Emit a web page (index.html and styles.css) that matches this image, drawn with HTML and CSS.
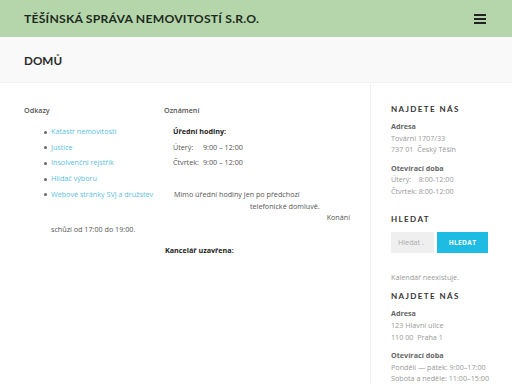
FILE: index.html
```html
<!DOCTYPE html>
<html lang="cs">
<head>
  <meta charset="UTF-8">
  <title>Těšínská správa nemovitostí s.r.o.</title>
  <link rel="stylesheet" href="styles.css">
</head>
<body>

<header class="site-header">
  <div class="brand">Těšínská správa nemovitostí s.r.o.</div>
  <button class="menu-toggle" aria-label="Menu">
    <span></span><span></span><span></span>
  </button>
</header>

<div class="page-title">
  <h1>Domů</h1>
</div>

<div class="page">
  <main class="content">
    <div class="columns">
      <div class="col">
        <h2 class="col-title">Odkazy</h2>
        <ul class="links">
          <li><a href="#">Katastr nemovitostí</a></li>
          <li><a href="#">Justice</a></li>
          <li><a href="#">Insolvenční rejstřík</a></li>
          <li><a href="#">Hlídač výboru</a></li>
          <li><a href="#">Webové stránky SVJ a družstev</a></li>
        </ul>
      </div>
      <div class="col">
        <h2 class="col-title">Oznámení</h2>
        <div class="notice">
          <p class="hours-title">Úřední hodiny:</p>
          <p class="hours"><span class="day">Úterý:</span>9:00 – 12:00</p>
          <p class="hours"><span class="day">Čtvrtek:</span>9:00 – 12:00</p>
          <p class="note">
            <span class="note-1">Mimo úřední hodiny jen po předchozí</span>
            <span class="note-2">telefonické domluvě.</span>
            <span class="note-3">Konání</span>
          </p>
        </div>
      </div>
    </div>
    <p class="meeting">schůzí od 17:00 do 19:00.</p>
    <p class="closed">Kancelář uzavřena:</p>
  </main>

  <aside class="sidebar">
    <section class="widget widget-contact">
      <h3 class="widget-title">Najdete nás</h3>
      <p class="label">Adresa</p>
      <p>Tovární 1707/33<br>737 01&nbsp; Český Těšín</p>
      <p class="label">Otevírací doba</p>
      <p>Úterý:&nbsp;&nbsp;&nbsp; 8:00-12:00<br>Čtvrtek: 8:00-12:00</p>
    </section>

    <section class="widget widget-search">
      <h3 class="widget-title">Hledat</h3>
      <form class="search" onsubmit="return false">
        <input type="text" placeholder="Hledat .">
        <button type="submit">Hledat</button>
      </form>
    </section>

    <section class="widget widget-calendar">
      <p>Kalendář neexistuje.</p>
    </section>

    <section class="widget">
      <h3 class="widget-title">Najdete nás</h3>
      <p class="label">Adresa</p>
      <p>123 Hlavní ulice<br>110 00&nbsp; Praha 1</p>
      <p class="label">Otevírací doba</p>
      <p>Pondělí — pátek: 9:00–17:00<br>Sobota a neděle: 11:00–15:00</p>
    </section>
  </aside>
</div>

</body>
</html>
```

FILE: styles.css
```css
* {
  box-sizing: border-box;
  margin: 0;
  padding: 0;
}
body {
  font-family: 'Open Sans', sans-serif;
  font-size: 7.2px;
  color: #777;
  background: #fff;
  overflow: hidden;
}

/* header */
.site-header {
  height: 37px;
  background: #b5d6ab;
  display: flex;
  align-items: center;
  justify-content: space-between;
  padding: 0 26px 0 24px;
}
.brand {
  font-family: Lato, sans-serif;
  font-weight: 700;
  font-size: 12.2px;
  text-transform: uppercase;
  color: #1e2a1e;
  letter-spacing: 0.2px;
}
.menu-toggle {
  display: flex;
  flex-direction: column;
  gap: 2px;
  background: none;
  border: none;
  cursor: pointer;
}
.menu-toggle span {
  display: block;
  width: 12px;
  height: 2px;
  background: #222;
}

.page-title {
  background: #f8f9f8;
  height: 46px;
  display: flex;
  align-items: center;
  padding-left: 24px;
  border-bottom: 1px solid #f1f2f1;
}
.page-title h1 {
  font-family: Lato, sans-serif;
  font-weight: 700;
  font-size: 11.7px;
  text-transform: uppercase;
  color: #2a2a2a;
}

.page {
  display: flex;
}

/* main content */
.content {
  width: 370px;
  padding: 22px 10px 0 24px;
}
.columns {
  display: grid;
  grid-template-columns: 140px 1fr;
}
.col-title {
  font-size: 7.2px;
  font-weight: 600;
  color: #555;
  margin-bottom: 9px;
}
.links {
  list-style: none;
  padding-left: 27px;
}
.links li {
  line-height: 15.7px;
  position: relative;
}
.links li::before {
  content: '';
  position: absolute;
  left: -7px;
  top: 6.5px;
  width: 3px;
  height: 3px;
  border-radius: 50%;
  background: #666;
}
.links a {
  color: #5bc0de;
  text-decoration: none;
}

.notice {
  padding-left: 9px;
  color: #555;
}
.notice p {
  line-height: 15.7px;
}
.hours-title {
  font-weight: 700;
  color: #222;
}
.hours .day {
  display: inline-block;
  width: 30px;
}
.notice .note {
  margin-top: 18px;
  display: flex;
  flex-direction: column;
  line-height: 11.5px;
}
.note-1 {
  padding-left: 1px;
}
.note-2 {
  padding-left: 77px;
}
.note-3 {
  align-self: flex-end;
  padding-right: 10px;
}
.meeting {
  color: #555;
  padding-left: 27px;
  line-height: 11.5px;
}
.closed {
  font-weight: 700;
  color: #222;
  padding-left: 141px;
  margin-top: 10px;
}

/* sidebar */
.sidebar {
  flex: 1;
  border-left: 1px solid #f1f1f1;
  padding: 20px 20px 0 20px;
  min-height: 301px;
}
.widget {
  margin-bottom: 20px;
}
.widget-contact {
  margin-bottom: 15px;
}
.widget-title {
  font-family: Lato, sans-serif;
  font-size: 8px;
  font-weight: 700;
  letter-spacing: 1.4px;
  line-height: 12px;
  text-transform: uppercase;
  color: #333;
  margin-bottom: 6px;
}
.widget p {
  line-height: 11.7px;
  color: #999;
  margin-bottom: 6.5px;
}
.widget p.label {
  font-weight: 700;
  color: #666;
  margin-bottom: 0;
}
.widget-search .widget-title {
  margin-bottom: 7px;
}
.search {
  display: flex;
  gap: 3px;
}
.search input {
  width: 43px;
  height: 21px;
  border: none;
  background: #efefef;
  padding-left: 7px;
  font-family: 'Open Sans', sans-serif;
  font-size: 7.2px;
  color: #999;
}
.search input::placeholder {
  color: #aaa;
}
.search button {
  width: 51px;
  height: 21px;
  border: none;
  background: #1ebbe3;
  color: #fff;
  font-family: 'Open Sans', sans-serif;
  font-size: 6.5px;
  font-weight: 700;
  letter-spacing: 0.4px;
  text-transform: uppercase;
}
.widget-search {
  margin-bottom: 19px;
}
.widget-calendar {
  margin-bottom: 7px;
}
```
